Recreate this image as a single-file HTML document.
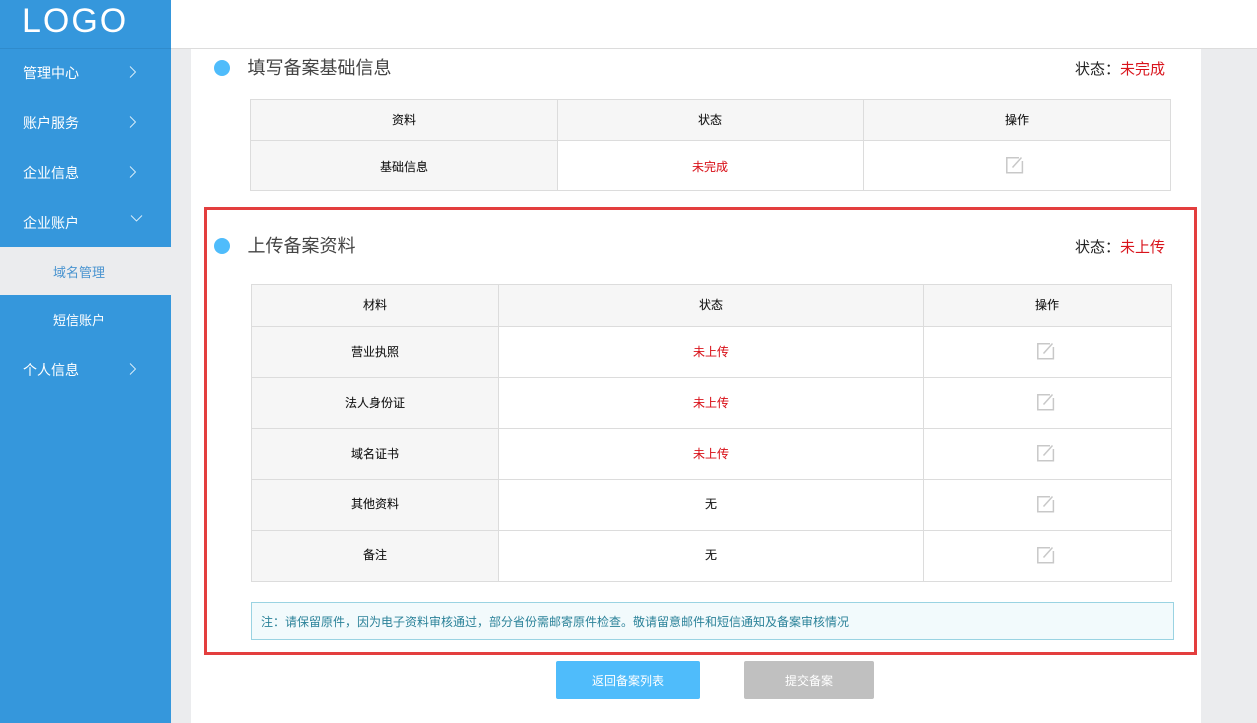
<!DOCTYPE html>
<html lang="zh"><head><meta charset="utf-8"><title>备案</title>
<style>
*{box-sizing:border-box;margin:0;padding:0}
html,body{width:1257px;height:723px;overflow:hidden;background:#ebecee;font-family:"Liberation Sans","Noto Sans CJK SC",sans-serif;color:#222}
.a{position:absolute}
.t{position:absolute;white-space:nowrap;line-height:20px}
.c{transform:translateX(-50%);font-size:12px;color:#111;-webkit-text-stroke:.08px currentColor}
.r{color:#d9141c}
.n{left:23px;font-size:14px;color:#fff}
.s{left:53px;font-size:13px;color:#fff}
.h{left:247.5px;font-size:18px;color:#444;line-height:24px}
.st{left:1075px;font-size:15px;color:#222}
.l{position:absolute;background:#dcdcdc}
.g{position:absolute;background:#f6f6f6}
svg{position:absolute;overflow:visible}
.ar{fill:none;stroke:#dff0fb;stroke-width:.9}
.ic{width:18px;height:18px}
.ic path{fill:none;stroke:#c8c8c8;stroke-width:1.5}
</style></head><body>
<div class="a" style="left:191px;top:0;width:1010px;height:723px;background:#fff"></div>
<div class="a" style="left:171px;top:0;width:1086px;height:49px;background:#fff;border-bottom:1px solid #dcdcdc"></div>

<div class="a" style="left:0;top:0;width:171px;height:723px;background:#3597dc"></div>
<div class="a" style="left:0;top:48px;width:171px;height:1px;background:#2f8bcc"></div>
<div class="a" style="left:0;top:247px;width:171px;height:48px;background:#ebecee"></div>
<div class="t" style="left:22px;top:1px;font-size:34px;line-height:40px;color:#fff;letter-spacing:2px">LOGO</div>
<div class="t n" style="top:63px">管理中心</div>
<div class="t n" style="top:113px">账户服务</div>
<div class="t n" style="top:163px">企业信息</div>
<div class="t n" style="top:213px">企业账户</div>
<div class="t s" style="top:263px;color:#4a94d0">域名管理</div>
<div class="t s" style="top:311px">短信账户</div>
<div class="t n" style="top:360px">个人信息</div>
<svg style="left:0;top:0" width="171" height="400">
<path class="ar" d="M130 66.5l5.5 5.5-5.5 5.5M130 116.5l5.5 5.5-5.5 5.5M130 166.5l5.5 5.5-5.5 5.5M130 363.5l5.5 5.5-5.5 5.5M131 215.5l5.5 5.5 5.5-5.5"/>
</svg>

<!-- section 1 -->
<div class="a" style="left:214px;top:60px;width:16px;height:16px;border-radius:50%;background:#4fbcfb"></div>
<div class="t h" style="top:56px">填写备案基础信息</div>
<div class="t st" style="top:60px">状态：<span class="r">未完成</span></div>

<div class="g" style="left:250px;top:99px;width:921px;height:41px"></div>
<div class="g" style="left:250px;top:140px;width:307px;height:51px"></div>
<div class="l" style="left:250px;top:99px;width:921px;height:1px"></div>
<div class="l" style="left:250px;top:140px;width:921px;height:1px"></div>
<div class="l" style="left:250px;top:190px;width:921px;height:1px"></div>
<div class="l" style="left:250px;top:99px;width:1px;height:92px"></div>
<div class="l" style="left:557px;top:99px;width:1px;height:92px"></div>
<div class="l" style="left:863px;top:99px;width:1px;height:92px"></div>
<div class="l" style="left:1170px;top:99px;width:1px;height:92px"></div>
<div class="t c" style="left:404px;top:110px">资料</div>
<div class="t c" style="left:710px;top:110px">状态</div>
<div class="t c" style="left:1017px;top:110px">操作</div>
<div class="t c" style="left:404px;top:157px">基础信息</div>
<div class="t c r" style="left:710px;top:157px">未完成</div>
<svg class="ic" style="left:1006px;top:156px" viewBox="0 0 18 18"><path d="M13 1.7H.8V16.8H16.4V5M6.5 11.5L15.5 1.5"/></svg>

<!-- section 2 -->
<div class="a" style="left:204px;top:207px;width:993px;height:448px;border:3px solid #e33e3e"></div>
<div class="a" style="left:214px;top:238px;width:16px;height:16px;border-radius:50%;background:#4fbcfb"></div>
<div class="t h" style="top:234px">上传备案资料</div>
<div class="t st" style="top:238px">状态：<span class="r">未上传</span></div>

<div class="g" style="left:251px;top:284px;width:921px;height:42px"></div>
<div class="g" style="left:251px;top:326px;width:247px;height:256px"></div>
<div class="l" style="left:251px;top:284px;width:921px;height:1px"></div>
<div class="l" style="left:251px;top:326px;width:921px;height:1px"></div>
<div class="l" style="left:251px;top:377px;width:921px;height:1px"></div>
<div class="l" style="left:251px;top:428px;width:921px;height:1px"></div>
<div class="l" style="left:251px;top:479px;width:921px;height:1px"></div>
<div class="l" style="left:251px;top:530px;width:921px;height:1px"></div>
<div class="l" style="left:251px;top:581px;width:921px;height:1px"></div>
<div class="l" style="left:251px;top:284px;width:1px;height:298px"></div>
<div class="l" style="left:498px;top:284px;width:1px;height:298px"></div>
<div class="l" style="left:923px;top:284px;width:1px;height:298px"></div>
<div class="l" style="left:1171px;top:284px;width:1px;height:298px"></div>
<div class="t c" style="left:375px;top:295px">材料</div>
<div class="t c" style="left:711px;top:295px">状态</div>
<div class="t c" style="left:1047px;top:295px">操作</div>
<div class="t c" style="left:375px;top:342px">营业执照</div>
<div class="t c r" style="left:711px;top:342px">未上传</div>
<div class="t c" style="left:375px;top:393px">法人身份证</div>
<div class="t c r" style="left:711px;top:393px">未上传</div>
<div class="t c" style="left:375px;top:444px">域名证书</div>
<div class="t c r" style="left:711px;top:444px">未上传</div>
<div class="t c" style="left:375px;top:494px">其他资料</div>
<div class="t c" style="left:711px;top:494px">无</div>
<div class="t c" style="left:375px;top:545px">备注</div>
<div class="t c" style="left:711px;top:545px">无</div>
<svg class="ic" style="left:1037px;top:342px" viewBox="0 0 18 18"><path d="M13 1.7H.8V16.8H16.4V5M6.5 11.5L15.5 1.5"/></svg>
<svg class="ic" style="left:1037px;top:393px" viewBox="0 0 18 18"><path d="M13 1.7H.8V16.8H16.4V5M6.5 11.5L15.5 1.5"/></svg>
<svg class="ic" style="left:1037px;top:444px" viewBox="0 0 18 18"><path d="M13 1.7H.8V16.8H16.4V5M6.5 11.5L15.5 1.5"/></svg>
<svg class="ic" style="left:1037px;top:495px" viewBox="0 0 18 18"><path d="M13 1.7H.8V16.8H16.4V5M6.5 11.5L15.5 1.5"/></svg>
<svg class="ic" style="left:1037px;top:546px" viewBox="0 0 18 18"><path d="M13 1.7H.8V16.8H16.4V5M6.5 11.5L15.5 1.5"/></svg>

<div class="a" style="left:251px;top:602px;width:923px;height:38px;background:#f2fafc;border:1px solid #9ad3e2"></div>
<div class="t" style="left:261px;top:612px;font-size:12px;color:#2b8299">注：请保留原件，因为电子资料审核通过，部分省份需邮寄原件检查。敬请留意邮件和短信通知及备案审核情况</div>

<div class="a" style="left:556px;top:661px;width:144px;height:38px;background:#4fbcfb;border-radius:2px"></div>
<div class="t c" style="left:628px;top:671px;color:#fff;-webkit-text-stroke:0">返回备案列表</div>
<div class="a" style="left:744px;top:661px;width:130px;height:38px;background:#c0c0c0;border-radius:2px"></div>
<div class="t c" style="left:809px;top:671px;color:#fff;-webkit-text-stroke:0">提交备案</div>
</body></html>
